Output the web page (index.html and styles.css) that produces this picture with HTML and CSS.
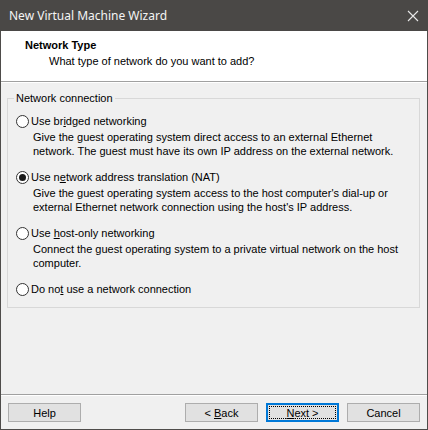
FILE: index.html
```html
<!DOCTYPE html>
<html>
<head>
<meta charset="utf-8">
<link rel="stylesheet" href="styles.css">
</head>
<body>
<div class="window">
  <div class="titlebar">
    <span class="title">New Virtual Machine Wizard</span>
    <svg class="close" width="12" height="12" viewBox="0 0 12 12"><path d="M1 1 L11 11 M11 1 L1 11" stroke="#e8e8e8" stroke-width="1.1" fill="none"/></svg>
  </div>
  <div class="header">
    <div class="h-title">Network Type</div>
    <div class="h-sub">What type of network do you want to add?</div>
  </div>
  <div class="main">
    <fieldset class="group">
      <legend>Network connection</legend>
      <div class="option">
        <div class="opt-row"><span class="radio"></span><span>Use br<u>i</u>dged networking</span></div>
        <div class="desc">Give the guest operating system direct access to an external Ethernet<br>network. The guest must have its own IP address on the external network.</div>
      </div>
      <div class="option">
        <div class="opt-row"><span class="radio checked"></span><span>Use n<u>e</u>twork address translation (NAT)</span></div>
        <div class="desc">Give the guest operating system access to the host computer's dial-up or<br>external Ethernet network connection using the host's IP address.</div>
      </div>
      <div class="option">
        <div class="opt-row"><span class="radio"></span><span>Use <u>h</u>ost-only networking</span></div>
        <div class="desc">Connect the guest operating system to a private virtual network on the host<br>computer.</div>
      </div>
      <div class="option">
        <div class="opt-row"><span class="radio"></span><span>Do no<u>t</u> use a network connection</span></div>
      </div>
    </fieldset>
  </div>
  <div class="footer">
    <button class="btn"><span>Help</span></button>
    <div class="spacer"></div>
    <button class="btn"><span>&lt; <u>B</u>ack</span></button>
    <button class="btn default"><span class="focus"><span><u>N</u>ext &gt;</span></span></button>
    <button class="btn"><span>Cancel</span></button>
  </div>
</div>
</body>
</html>
```
FILE: styles.css
```css
html, body {
  margin: 0;
  padding: 0;
  background: #f0f0f0;
}
.window {
  width: 428px;
  height: 430px;
  box-sizing: border-box;
  border: 1px solid #4e4c4a;
  border-top: 0;
  display: flex;
  flex-direction: column;
  background: #f0f0f0;
  font-family: "Liberation Sans", Arial, sans-serif;
  font-size: 11px;
  color: #000;
}
.titlebar {
  height: 31px;
  flex: none;
  background: #4a4846;
  display: flex;
  align-items: center;
  justify-content: space-between;
  padding: 0 9px 0 9px;
  margin: 0 -1px;
}
.title {
  font-family: "Noto Sans", "Open Sans", sans-serif;
  font-size: 12px;
  color: #f4f4f4;
}
.header {
  height: 51px;
  flex: none;
  background: #fff;
  border-bottom: 1px solid #a0a0a0;
  box-sizing: border-box;
  padding-top: 7px;
}
.h-title {
  font-weight: bold;
  line-height: 14px;
  padding-left: 24px;
}
.h-sub {
  line-height: 14px;
  padding-left: 48px;
  margin-top: 2px;
}
.main {
  flex: 1;
  border-top: 1px solid #fff;
  padding: 8px 7px 0 6px;
}
.group {
  margin: 0;
  border: 1px solid #d8d8d8;
  padding: 9px 0 11px 6px;
  min-width: 0;
}
.group legend {
  padding: 0 2px;
  line-height: 14px;
}
.option {
  margin-left: 2px;
}
.option + .option {
  margin-top: 12px;
}
.opt-row {
  display: flex;
  align-items: center;
  gap: 2px;
  height: 14px;
  line-height: 14px;
}
.radio {
  width: 13px;
  height: 13px;
  box-sizing: border-box;
  border: 1px solid #333;
  border-radius: 50%;
  background: #fff;
  display: inline-flex;
  align-items: center;
  justify-content: center;
  flex: none;
}
.radio.checked::after {
  content: "";
  width: 7px;
  height: 7px;
  border-radius: 50%;
  background: #1a1a1a;
}
.desc {
  padding-left: 17px;
  line-height: 14px;
  margin-top: 2px;
  white-space: nowrap;
}
.footer {
  flex: none;
  height: 35px;
  box-sizing: border-box;
  border-top: 1px solid #a0a0a0;
  box-shadow: inset 0 1px 0 #fff;
  display: flex;
  align-items: flex-start;
  padding: 8px 7px 0 7px;
  gap: 8px;
}
.spacer {
  flex: 1;
}
.btn {
  width: 73px;
  height: 19px;
  box-sizing: border-box;
  margin: 0;
  padding: 0;
  border: 1px solid #adadad;
  background: #e1e1e1;
  font-family: "Liberation Sans", Arial, sans-serif;
  font-size: 11px;
  color: #000;
  display: flex;
  align-items: center;
  justify-content: center;
  white-space: pre;
}
.btn.default {
  border: 1px solid #0078d7;
  box-shadow: inset 0 0 0 1px #0078d7;
  padding: 2px;
}
.focus {
  flex: 1;
  align-self: stretch;
  display: flex;
  align-items: center;
  justify-content: center;
  outline: 1px dotted #000;
  outline-offset: -1px;
}
```
